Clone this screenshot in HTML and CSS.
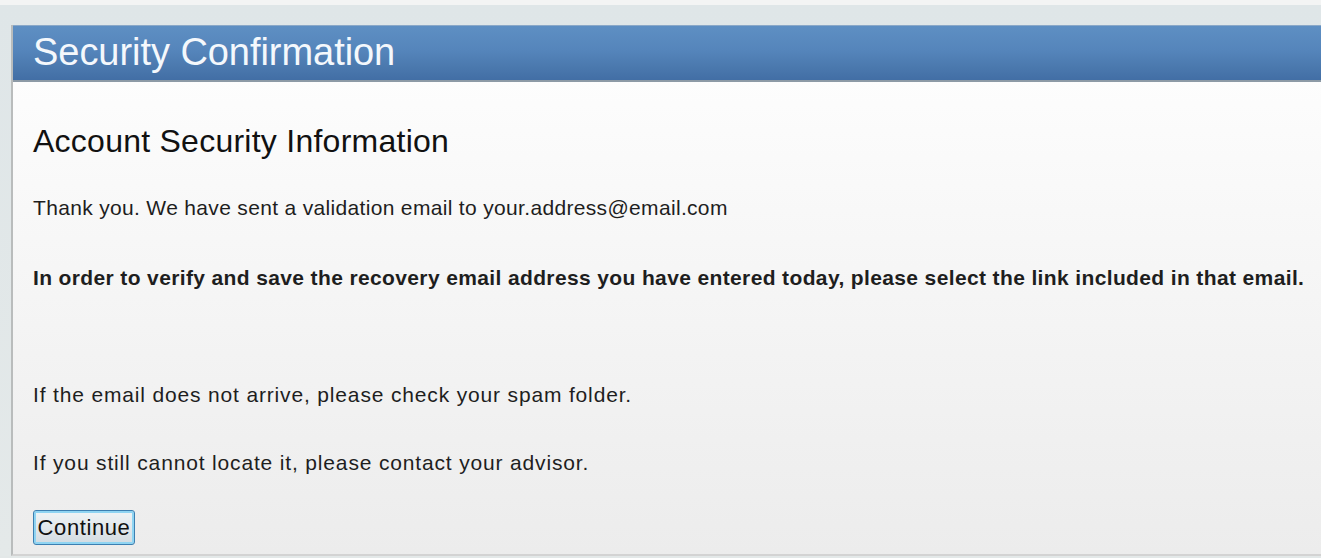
FILE: index.html
```html
<!DOCTYPE html>
<html lang="en">
<head>
<meta charset="utf-8">
<title>Security Confirmation</title>
<link rel="stylesheet" href="styles.css">
</head>
<body>
<div class="page">
  <div class="panel">
    <div class="panel-header">
      <h1 class="panel-title">Security Confirmation</h1>
    </div>
    <div class="panel-body">
      <h2 class="section-title">Account Security Information</h2>
      <p class="msg msg-first">Thank you. We have sent a validation email to your.address@email.com</p>
      <p class="msg msg-strong">In order to verify and save the recovery email address you have entered today, please select the link included in that email.</p>
      <p class="msg msg-note msg-spaced">If the email does not arrive, please check your spam folder.</p>
      <p class="msg msg-note">If you still cannot locate it, please contact your advisor.</p>
      <button class="btn" type="button">Continue</button>
    </div>
  </div>
</div>
</body>
</html>
```
FILE: styles.css
```css
html, body {
  margin: 0;
  padding: 0;
}

body {
  font-family: "Liberation Sans", Arial, sans-serif;
  background: #e3e8e8;
  color: #1a1a1a;
  height: 558px;
  overflow: hidden;
}

.page {
  border-top: 5px solid #f3f4f4;
  padding-top: 20px;
  background: linear-gradient(#dfe6e8, #e4e9e9);
}

.panel {
  margin-left: 11px;
  border-left: 2px solid #b9bcbc;
  border-bottom: 2px solid #d3d3d3;
  background: linear-gradient(#ffffff 0%, #f8f8f8 35%, #ececec 100%);
  height: 531px;
  box-sizing: border-box;
}

.panel-header {
  height: 57px;
  box-sizing: border-box;
  border-top: 1px solid #8aa8c8;
  border-bottom: 2px solid #8d9aa6;
  background: linear-gradient(#5e8fc3 0%, #5585bb 45%, #4b79ae 75%, #426ea5 100%);
  padding-left: 20px;
}

.panel-title {
  margin: 0;
  font-weight: normal;
  font-size: 38px;
  line-height: 52px;
  color: #f4f8fc;
  letter-spacing: -0.05px;
}

.panel-body {
  padding: 41px 0 0 20px;
}

.section-title {
  margin: 0;
  font-weight: normal;
  font-size: 32px;
  line-height: 37px;
  color: #111111;
  letter-spacing: 0.25px;
}

.msg {
  margin: 44px 0 0;
  font-size: 21px;
  line-height: 24px;
  color: #1e1e1e;
  letter-spacing: 0.33px;
}

.msg-first {
  margin-top: 36px;
}

.msg-strong {
  margin-top: 46px;
  font-weight: bold;
  letter-spacing: 0.37px;
}

/* the two closing notes are set a little looser */
.msg-note {
  letter-spacing: 0.84px;
}

.msg-spaced {
  margin-top: 93px;
}

.btn {
  display: block;
  margin-top: 35px;
  width: 102px;
  height: 35px;
  padding: 0;
  font-family: "Liberation Sans", Arial, sans-serif;
  font-size: 22px;
  letter-spacing: 0.6px;
  color: #111111;
  border: 1px solid #3c7fb1;
  border-radius: 3px;
  box-shadow: inset 0 0 0 2px #8fd4f2;
  background: linear-gradient(#f0f4f6 0%, #e2e8ec 50%, #d2dbe1 100%);
}
```
